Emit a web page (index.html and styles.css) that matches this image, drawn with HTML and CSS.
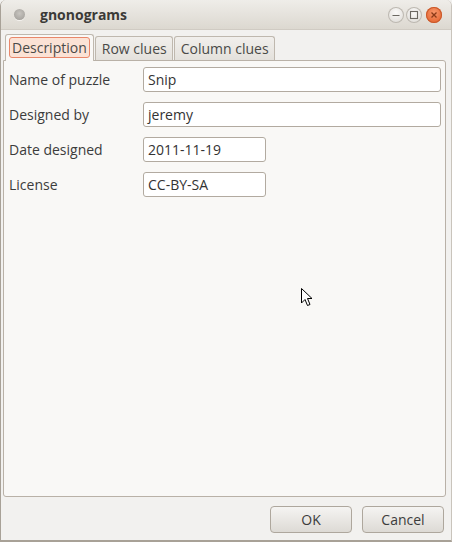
FILE: index.html
```html
<!DOCTYPE html>
<html>
<head>
<meta charset="utf-8">
<link rel="stylesheet" href="styles.css">
</head>
<body>
<div class="window">
  <div class="titlebar">
    <span class="dot"></span>
    <span class="title">gnonograms</span>
    <div class="wbtns">
      <span class="wbtn"><svg width="16" height="16" viewBox="0 0 16 16"><line x1="4.5" y1="8.5" x2="11.5" y2="8.5" stroke="#6b6862" stroke-width="1.2"/></svg></span>
      <span class="wbtn"><svg width="16" height="16" viewBox="0 0 16 16"><rect x="4.5" y="4.5" width="7" height="7" fill="none" stroke="#6b6862" stroke-width="1.1"/></svg></span>
      <span class="wbtn close"><svg width="16" height="16" viewBox="0 0 16 16"><path d="M5.5 5.5 L10.5 10.5 M10.5 5.5 L5.5 10.5" stroke="#8a3a18" stroke-width="1.3"/></svg></span>
    </div>
  </div>
  <div class="content">
    <div class="tabs">
      <div class="tab active"><span class="focus">Description</span></div>
      <div class="tab">Row clues</div>
      <div class="tab">Column clues</div>
    </div>
    <div class="panel">
      <div class="row"><span class="label">Name of puzzle</span><span class="entry wide">Snip</span></div>
      <div class="row"><span class="label">Designed by</span><span class="entry wide">jeremy</span></div>
      <div class="row"><span class="label">Date designed</span><span class="entry short">2011-11-19</span></div>
      <div class="row"><span class="label">License</span><span class="entry short">CC-BY-SA</span></div>
      <svg class="cursor" width="14" height="22" viewBox="0 0 14 22"><path d="M1.5 1.5 L1.5 16 L5 12.5 L7.5 18.5 L10 17.5 L7.5 11.5 L12 11.5 Z" fill="#fff" stroke="#000" stroke-width="1" stroke-linejoin="miter"/></svg>
    </div>
    <div class="actions">
      <span class="btn">OK</span>
      <span class="btn">Cancel</span>
    </div>
  </div>
</div>
</body>
</html>
```

FILE: styles.css
```css
html, body {
  margin: 0;
  padding: 0;
  background: #f2f1ef;
}
body {
  font-family: "Open Sans", "Noto Sans", sans-serif;
  font-size: 14px;
  color: #3c3c3c;
}
.window {
  width: 452px;
  height: 542px;
  box-sizing: border-box;
  border-left: 1px solid #a8a197;
  border-bottom: 2px solid #a8a197;
  border-right: 1px solid #c9c4bc;
  display: flex;
  flex-direction: column;
  background: #f2f1ef;
  border-radius: 6px 6px 0 0;
  overflow: hidden;
}
.titlebar {
  height: 30px;
  flex: none;
  display: flex;
  align-items: center;
  background: linear-gradient(#efede9, #dcd8d0);
  border-bottom: 1px solid #d0cbc3;
  box-sizing: border-box;
  padding-left: 13px;
}
.dot {
  width: 11px;
  height: 11px;
  border-radius: 50%;
  background: radial-gradient(circle at 50% 40%, #c8c5c0, #9d9a95);
  box-shadow: 0 1px 0 #f4f2ee;
}
.title {
  margin-left: 15px;
  font-weight: bold;
  font-size: 14px;
  color: #3b3a37;
}
.wbtns {
  margin-left: auto;
  margin-right: 9px;
  display: flex;
  gap: 2px;
}
.wbtn {
  width: 16px;
  height: 16px;
  border-radius: 50%;
  background: radial-gradient(circle at 50% 35%, #fbfaf9, #d9d6d1);
  box-shadow: inset 0 0 0 1px #bdb8b0;
  display: block;
}
.wbtn svg { display: block; }
.wbtn.close {
  margin-left: 2px;
  background: radial-gradient(circle at 50% 35%, #f7966a, #e05a24);
  box-shadow: inset 0 0 0 1px #c8582a;
}
.content {
  flex: 1;
  display: flex;
  flex-direction: column;
  padding: 4px 5px 0 2px;
}
.tabs {
  display: flex;
  padding-left: 2px;
  height: 26px;
  align-items: flex-end;
  gap: 1px;
  position: relative;
  z-index: 1;
}
.tab {
  height: 24px;
  box-sizing: border-box;
  padding: 0 5px 0 6px;
  display: flex;
  align-items: center;
  border: 1px solid #bfb8ae;
  border-bottom: none;
  border-radius: 3px 3px 0 0;
  background: linear-gradient(#f1efec, #e4e1dc);
  color: #4a4a48;
}
.tab.active {
  height: 27px;
  padding: 0 3px;
  background: #f9f8f6;
  margin-bottom: -1px;
}
.focus {
  border: 1px solid #e9876a;
  background: #fbe2d5;
  border-radius: 3px;
  padding: 0 2px;
  height: 19px;
  line-height: 19px;
  margin-top: -2px;
}
.panel {
  height: 437px;
  box-sizing: border-box;
  border: 1px solid #b9b1a7;
  border-radius: 0 3px 3px 3px;
  background: #f9f8f6;
  padding: 6px 4px 0 5px;
  display: flex;
  flex-direction: column;
  gap: 10px;
  position: relative;
}
.row {
  display: flex;
  align-items: center;
  height: 25px;
}
.label {
  width: 134px;
  flex: none;
}
.entry {
  height: 25px;
  box-sizing: border-box;
  border: 1px solid #b2aaa0;
  border-radius: 3px;
  background: #fff;
  padding-left: 4px;
  display: flex;
  align-items: center;
  color: #333;
  font-size: 14px;
}
.entry.wide { flex: 1; }
.entry.short { width: 123px; }
.cursor {
  position: absolute;
  left: 296px;
  top: 226px;
}
.actions {
  display: flex;
  justify-content: flex-end;
  gap: 10px;
  padding-top: 9px;
  padding-right: 2px;
}
.btn {
  width: 82px;
  height: 27px;
  box-sizing: border-box;
  border: 1px solid #aea79d;
  border-radius: 4px;
  background: linear-gradient(#f5f4f2, #dddad5);
  display: flex;
  align-items: center;
  justify-content: center;
  color: #3c3c3c;
}
```
